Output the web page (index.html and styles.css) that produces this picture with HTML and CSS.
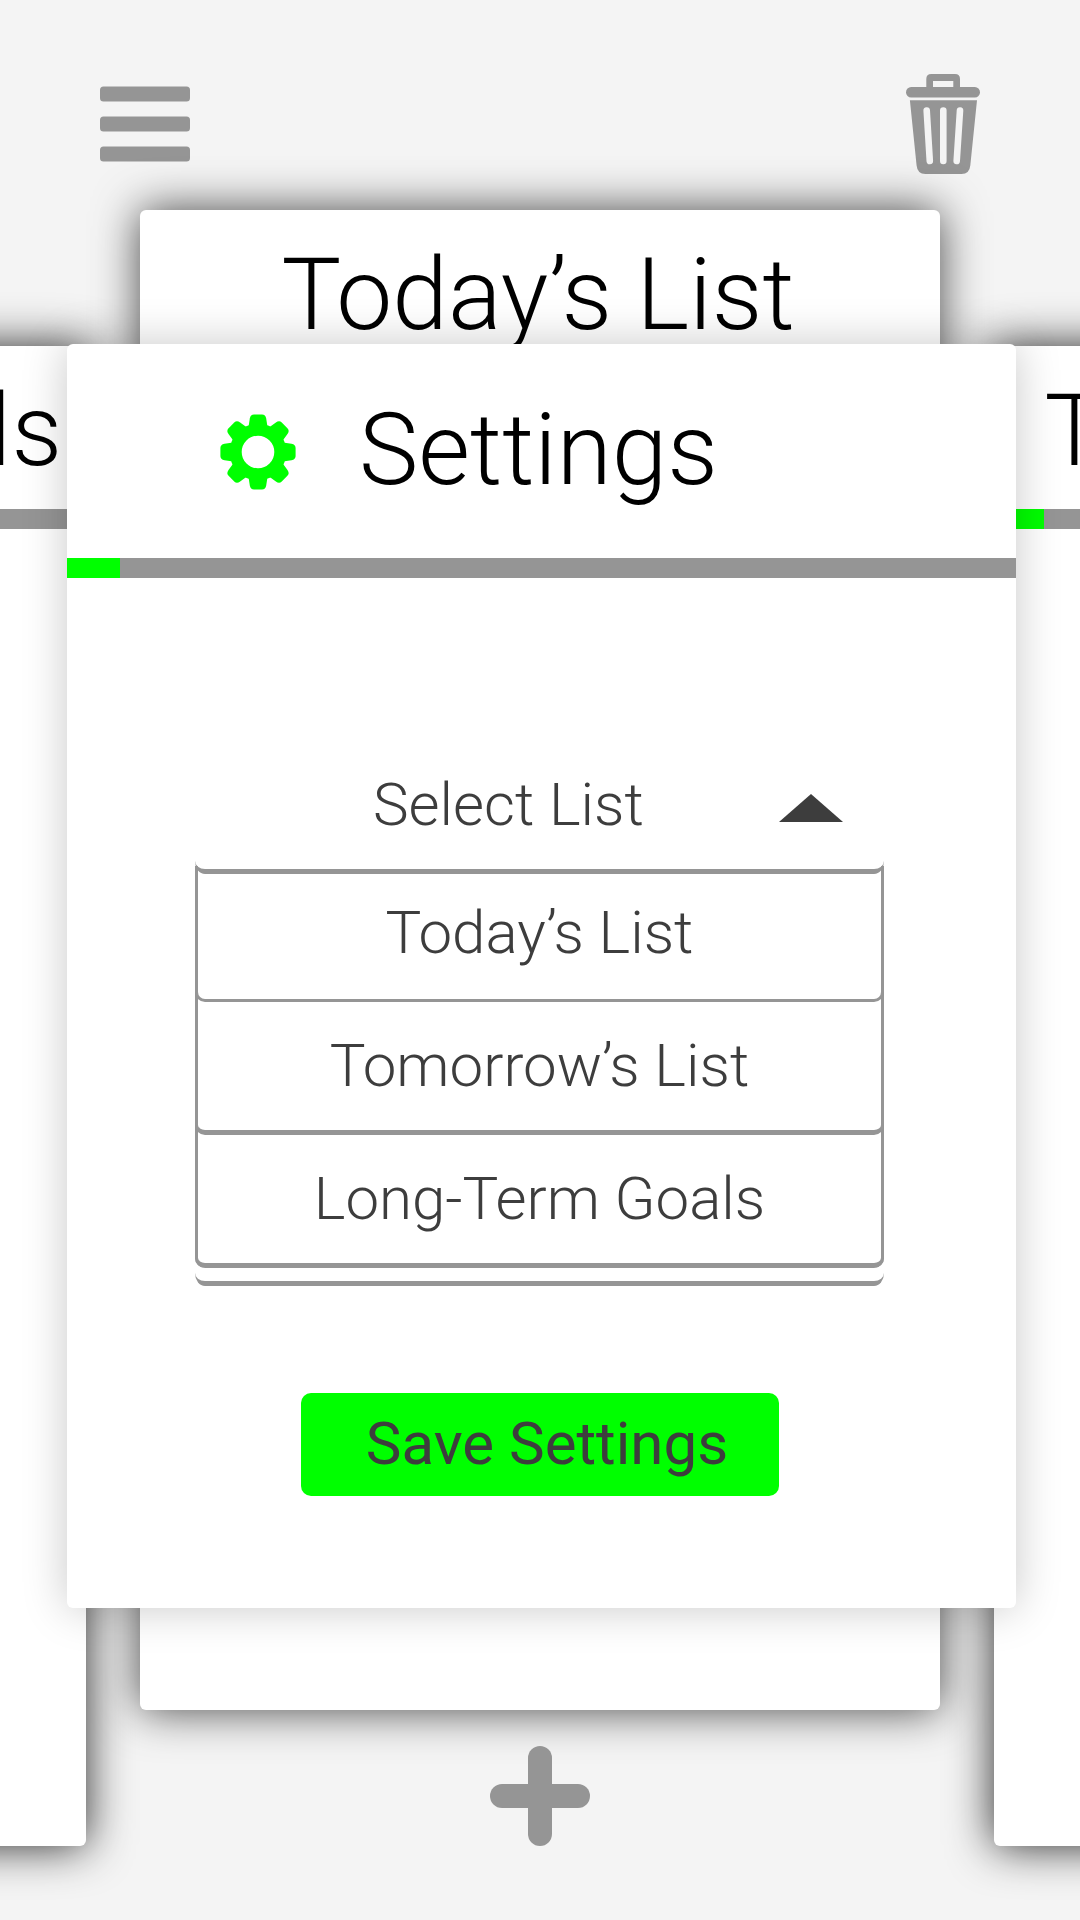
FILE: index.html
```html
<!DOCTYPE html>
<html lang="en">
<head>
<meta charset="utf-8">
<title>Settings</title>
<link rel="stylesheet" href="styles.css">
</head>
<body>
<div class="page">
  <header class="topbar">
    <svg class="icon-menu" width="90" height="76" viewBox="0 0 90 76">
      <rect y=".4" width="90" height="15.2" rx="3.5"/>
      <rect y="30.4" width="90" height="15.2" rx="3.5"/>
      <rect y="60.4" width="90" height="15.2" rx="3.5"/>
    </svg>
    <svg class="icon-trash" width="74" height="100" viewBox="0 0 74 100">
      <path fill-rule="evenodd" d="M20.3 14V5Q20.3 0 25.3 0H49Q54 0 54 5V14ZM27 7V13H47.3V7Z"/>
      <rect y="13" width="74" height="10.5" rx="5.2"/>
      <path d="M3.9 26.3H71L64.3 91.5Q63.5 100 55.5 100H19.4Q11.400 100 10.6 91.500Z"/>
      <path class="slots" d="M20.700 36.500L23.800 87M37.300 36.500V87M54 36.500L50.700 87"/>
    </svg>
  </header>

  <main class="deck">
    <section class="card side">
      <h2 class="card-title">Long-Term Goals</h2>
      <div class="progress"><div class="progress-fill"></div></div>
    </section>
    <section class="card current">
      <h2 class="card-title">Today’s List</h2>
      <div class="progress"><div class="progress-fill"></div></div>
    </section>
    <section class="card side">
      <h2 class="card-title">Tomorrow’s List</h2>
      <div class="progress"><div class="progress-fill"></div></div>
    </section>
  </main>

  <footer class="bottombar">
    <svg class="icon-add" width="100" height="100" viewBox="0 0 100 100">
      <rect x="38" width="24" height="100" rx="12"/>
      <rect y="38" width="100" height="24" rx="12"/>
    </svg>
  </footer>

  <div class="modal">
    <div class="modal-header">
      <svg class="icon-gear" width="76" height="76" viewBox="-38 -38 76 76">
        <defs>
          <path id="tooth" d="M-9.500 -25L-8.200 -33.500Q-7.500 -37.600 -4 -37.600H4Q7.500 -37.600 8.200 -33.500L9.500 -25Z"/>
        </defs>
        <circle r="22.300" fill="none" stroke-width="12"/>
        <use href="#tooth"/>
        <use href="#tooth" transform="rotate(45)"/>
        <use href="#tooth" transform="rotate(90)"/>
        <use href="#tooth" transform="rotate(135)"/>
        <use href="#tooth" transform="rotate(180)"/>
        <use href="#tooth" transform="rotate(225)"/>
        <use href="#tooth" transform="rotate(270)"/>
        <use href="#tooth" transform="rotate(315)"/>
      </svg>
      <h1 class="modal-title">Settings</h1>
    </div>
    <div class="progress"><div class="progress-fill"></div></div>
    <div class="modal-body">
      <div class="select">
        <span>Select List</span>
        <svg class="icon-arrow" width="64" height="28" viewBox="0 0 64 28"><path d="M0 28L32 0L64 28Z"/></svg>
      </div>
      <ul class="options">
        <li class="option first">Today’s List</li>
        <li class="option">Tomorrow’s List</li>
        <li class="option">Long-Term Goals</li>
      </ul>
      <div class="select-end"></div>
      <button class="save">Save Settings</button>
    </div>
  </div>
</div>
</body>
</html>
```
FILE: styles.css
```css
* {
  box-sizing: border-box;
}

body {
  margin: 0;
  font-family: Roboto, sans-serif;
  font-weight: 300;
  color: #3d3d3d;
}

h1, h2, ul {
  margin: 0;
  padding: 0;
  list-style: none;
  font-weight: 300;
}

svg {
  display: block;
  flex: none;
}

.page {
  position: relative;
  display: flex;
  flex-direction: column;
  width: 1080px;
  height: 1920px;
  overflow: hidden;
  background: #f4f4f4;
}

.topbar {
  flex: none;
  display: flex;
  justify-content: space-between;
  align-items: flex-start;
  height: 210px;
  padding: 74px 100px 0;
}

.icon-menu,
.icon-trash,
.icon-add {
  fill: #959595;
}

.icon-menu {
  margin-top: 12px;
}

.slots {
  fill: none;
  stroke: #f4f4f4;
  stroke-width: 6.6;
  stroke-linecap: round;
}

.deck {
  flex: none;
  display: grid;
  grid-template-columns: repeat(3, 800px);
  align-items: start;
  justify-content: center;
  gap: 54px;
}

.card {
  height: 1500px;
  border-radius: 6px;
  background: #fff;
  box-shadow: 0 0 45px rgba(0, 0, 0, .72);
}

.card.side {
  margin-top: 136px;
  box-shadow: 0 0 45px rgba(0, 0, 0, .84);
}

.card-title {
  height: 163px;
  padding-top: 3px;
  font-size: 100px;
  line-height: 163px;
  text-align: center;
  white-space: nowrap;
  color: #000;
}

.current .card-title {
  padding-right: 4px;
}

.progress {
  height: 20px;
  background: #959595;
}

.progress-fill {
  width: 50px;
  height: 100%;
  background: #0f0;
}

.bottombar {
  display: flex;
  justify-content: center;
  margin-top: -100px;
}

.modal {
  position: absolute;
  top: 344px;
  left: 67px;
  width: 949px;
  height: 1264px;
  border-radius: 6px;
  background: #fff;
  box-shadow: 0 0 45px rgba(0, 0, 0, .22);
}

.modal .progress-fill {
  width: 53px;
}

.modal-header {
  display: flex;
  align-items: center;
  gap: 63px;
  height: 214px;
  padding-left: 153px;
}

.icon-gear {
  margin-top: 1px;
  fill: #0f0;
  stroke: none;
}

.icon-gear circle {
  stroke: #0f0;
}

.modal-title {
  padding-bottom: 2px;
  font-size: 100px;
  line-height: 120px;
  color: #000;
}

.modal-body {
  display: flex;
  flex-direction: column;
  padding: 163px 132px 0 128px;
  font-size: 60px;
}

.select {
  position: relative;
  z-index: 1;
  display: flex;
  align-items: center;
  justify-content: space-between;
  height: 133px;
  padding: 0 41px 2px 178px;
  border-bottom: 5px solid #959595;
  border-radius: 0 0 10px 10px / 0 0 13px 13px;
}

.icon-arrow {
  margin-top: 7px;
  fill: #3d3d3d;
}

.options {
  margin-top: -8px;
  padding-top: 3px;
  border: solid #959595;
  border-width: 0 3px;
  border-radius: 0 0 10px 10px;
}

.option {
  height: 133px;
  margin: 0 -3px;
  border: solid #959595;
  border-width: 0 3px 5px;
  border-radius: 0 0 10px 10px;
  line-height: 128px;
  text-align: center;
}

.option.first {
  border-bottom-width: 3px;
}

.select-end {
  height: 18px;
  border-bottom: 5px solid #959595;
  border-radius: 0 0 10px 10px / 0 0 13px 13px;
}

.save {
  width: 478px;
  height: 103px;
  margin: 107px 0 0 106px;
  padding: 0 0 2px 14px;
  border: 0;
  border-radius: 10px;
  background: #0f0;
  font: 400 60px/101px Roboto, sans-serif;
  color: #3d3d3d;
}
```
